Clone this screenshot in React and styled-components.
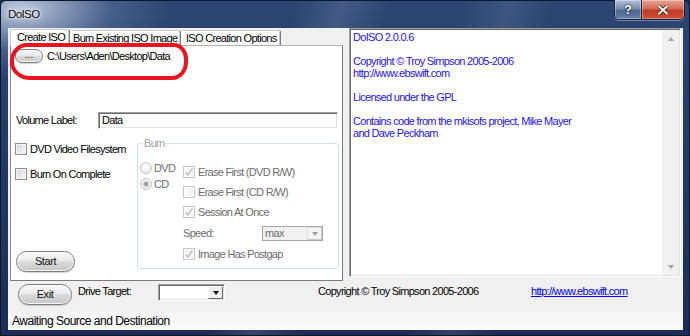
import React from 'react';
import styled, { createGlobalStyle, css } from 'styled-components';

const GlobalStyle = createGlobalStyle`
    html, body {
        margin: 0;
        padding: 0;
        background: #1b2a4d;
    }
    body {
        width: 690px;
        height: 336px;
        overflow: hidden;
        font-family: "Liberation Sans", Arial, sans-serif;
    }
    * {
        box-sizing: border-box;
    }
`;

const uiFont = css`
    font-family: "Liberation Sans", Arial, sans-serif;
    font-size: 11px;
    letter-spacing: -0.7px;
    line-height: 13px;
`;

const Window = styled.div`
    width: 690px;
    height: 336px;
    display: flex;
    flex-direction: column;
    border: 1px solid #0c1630;
    border-radius: 6px 6px 0 0;
    background:
        linear-gradient(105deg, rgba(255, 255, 255, 0) 38%, rgba(170, 190, 225, 0.18) 44%, rgba(255, 255, 255, 0) 50%),
        linear-gradient(100deg, rgba(255, 255, 255, 0) 62%, rgba(170, 190, 225, 0.14) 68%, rgba(255, 255, 255, 0) 74%),
        radial-gradient(ellipse 150px 70px at 20px 8px, rgba(196, 208, 228, 0.95), rgba(120, 145, 185, 0.35) 60%, rgba(60, 85, 130, 0) 100%),
        linear-gradient(180deg, #2d4572 0%, #223862 55%, #1c2d55 100%);
`;

const TitleBar = styled.div`
    height: 27px;
    flex: none;
    display: flex;
    align-items: flex-start;
    padding-left: 7px;
`;

const Title = styled.div`
    font-family: "Liberation Sans", Arial, sans-serif;
    font-size: 11.5px;
    letter-spacing: -0.6px;
    color: #000;
    line-height: 27px;
    text-shadow: 0 0 6px #fff, 0 0 3px #fff, 0 0 1px rgba(255, 255, 255, 0.9);
    flex: 1;
`;

const CaptionGroup = styled.div`
    display: flex;
    margin-right: 4px;
    margin-top: -1px;
    border: 1px solid #17213a;
    border-top: none;
    border-radius: 0 0 5px 5px;
    overflow: hidden;
    box-shadow: 0 1px 0 rgba(255, 255, 255, 0.35);
`;

const CaptionButton = styled.div`
    height: 19px;
    width: ${p => p.w}px;
    display: flex;
    align-items: center;
    justify-content: center;
    color: #fff;
    font-family: "Liberation Sans", Arial, sans-serif;
    font-weight: bold;
    font-size: 13px;
    text-shadow: 0 0 2px #000, 0 0 1px #000;
    box-shadow: inset 0 0 0 1px rgba(255, 255, 255, 0.35);
    background: ${p =>
        p.close
            ? 'linear-gradient(180deg, #e9a596 0%, #d46a55 45%, #c23b22 55%, #c9503a 100%)'
            : 'linear-gradient(180deg, #b5c2d8 0%, #7c90b4 45%, #4f668f 55%, #6780a8 100%)'};
    & + & {
        border-left: 1px solid #17213a;
    }
`;

const Client = styled.div`
    flex: 1;
    margin: 0 6px 5px 7px;
    background: #f0f0f0;
    display: flex;
    flex-direction: column;
    ${uiFont};
    color: #000;
`;

const Main = styled.div`
    height: 253px;
    flex: none;
    display: flex;
    align-items: flex-start;
`;

const TabArea = styled.div`
    position: relative;
    margin-left: 2px;
    width: 333px;
    height: 253px;
    padding-top: 1px;
    display: flex;
    flex-direction: column;
`;

const TabStrip = styled.div`
    height: 16px;
    display: flex;
    align-items: flex-end;
`;

const Tab = styled.div`
    position: relative;
    width: ${p => p.w}px;
    height: ${p => (p.active ? 17 : 15)}px;
    margin-bottom: ${p => (p.active ? -1 : 0)}px;
    z-index: ${p => (p.active ? 1 : 0)};
    background: #fff;
    border-top: 1px solid #c8c8c8;
    border-left: 1px solid ${p => (p.first ? '#c8c8c8' : '#ffffff')};
    border-right: 1px solid #7a7a7a;
    box-shadow: inset -1px 0 0 #c8c8c8;
    border-radius: 2px 2px 0 0;
    padding-left: ${p => p.pad}px;
    white-space: nowrap;
    line-height: ${p => (p.active ? 15 : 14)}px;
`;

const TabPage = styled.div`
    flex: 1;
    background: #fff;
    border: 1px solid;
    border-color: #b4b4b4 #7a7a7a #7a7a7a #8a8a8a;
    display: flex;
    flex-direction: column;
`;

const Annotation = styled.div`
    position: absolute;
    left: 0;
    top: 15px;
    width: 178px;
    height: 37px;
    border: 4px solid #e8141f;
    border-radius: 17px 14px 16px 20px / 18px 16px 18px 18px;
    pointer-events: none;
    z-index: 2;
`;

const BrowseRow = styled.div`
    display: flex;
    align-items: center;
    gap: 4px;
    margin-top: 3px;
    padding-left: 4px;
`;

const AeroButton = styled.div`
    width: ${p => p.w}px;
    height: ${p => p.h}px;
    flex: none;
    display: flex;
    align-items: center;
    justify-content: center;
    border: 1px solid #7c7c7c;
    border-radius: ${p => Math.round(p.h / 2)}px;
    background: linear-gradient(180deg, #f7f7f7 0%, #ededed 42%, #dadada 52%, #cdcdcd 85%, #c4c4c4 100%);
    box-shadow: inset 0 0 0 1px rgba(255, 255, 255, 0.85), 0 1px 1px rgba(0, 0, 0, 0.18);
    color: #111;
    font-size: ${p => (p.small ? 10 : 11)}px;
    letter-spacing: ${p => (p.small ? 0 : -0.4)}px;
    padding-bottom: ${p => (p.small ? 3 : 0)}px;
`;

const VolumeRow = styled.div`
    display: flex;
    align-items: center;
    margin-top: 49px;
    padding-left: 5px;
`;

const FieldLabel = styled.div`
    width: ${p => p.w}px;
    flex: none;
    color: ${p => (p.disabled ? '#6d6d6d' : '#000')};
`;

const TextInput = styled.div`
    width: 240px;
    height: 17px;
    background: #fff;
    border: 1px solid;
    border-color: #a0a0a0 #ffffff #ffffff #a0a0a0;
    box-shadow: inset 1px 1px 0 #696969, inset -1px -1px 0 #e3e3e3;
    padding-left: 3px;
    line-height: 15px;
`;

const Lower = styled.div`
    flex: 1;
    display: flex;
    margin-top: 8px;
`;

const LeftCol = styled.div`
    width: 126px;
    padding-left: 4px;
    padding-bottom: 8px;
    display: flex;
    flex-direction: column;
`;

const CheckRow = styled.div`
    display: flex;
    align-items: center;
    gap: ${p => p.gap ?? 3}px;
    height: 12px;
    margin-top: ${p => p.mt || 0}px;
    color: ${p => (p.disabled ? '#6d6d6d' : '#000')};
    white-space: nowrap;
`;

const Box = styled.span`
    width: 12px;
    height: 12px;
    flex: none;
    display: inline-flex;
    align-items: center;
    justify-content: center;
    border: 1px solid ${p => (p.disabled ? '#c6c6c6' : '#8e8f8f')};
    background: ${p =>
        p.disabled ? '#f4f4f4' : 'linear-gradient(135deg, #cfd1d4 0%, #e8e9ea 55%, #fbfbfb 100%)'};
    box-shadow: inset 0 0 0 1px ${p => (p.disabled ? '#fbfbfb' : '#f4f4f4')};
`;

const Radio = styled.span`
    width: 12px;
    height: 12px;
    flex: none;
    border-radius: 50%;
    display: inline-flex;
    align-items: center;
    justify-content: center;
    border: 1px solid #c4c4c4;
    background: radial-gradient(circle at 40% 35%, #fdfdfd, #e6e6e6);
    &::after {
        content: '';
        width: 4px;
        height: 4px;
        border-radius: 50%;
        background: ${p => (p.checked ? '#9c9c9c' : 'transparent')};
        box-shadow: ${p => (p.checked ? '0 0 0 1px #c9c9c9' : 'none')};
    }
`;

const StartSlot = styled.div`
    margin-top: auto;
    margin-left: 1px;
`;

const GroupBox = styled.fieldset`
    margin: 0;
    padding: 0;
    width: 202px;
    height: 132px;
    border: 1px solid #d5dfe5;
    border-radius: 3px;
    display: flex;
    min-width: 0;
`;

const Legend = styled.legend`
    margin-left: 5px;
    padding: 0 1px;
    color: #a0a0a0;
    line-height: 13px;
`;

const RadioCol = styled.div`
    width: 43px;
    margin-left: 2px;
    margin-top: 12px;
    display: flex;
    flex-direction: column;
    gap: 4px;
`;

const OptionsCol = styled.div`
    margin-top: 16px;
    display: flex;
    flex-direction: column;
    gap: 8px;
`;

const SpeedRow = styled.div`
    display: flex;
    align-items: center;
    height: 15px;
    margin-bottom: -1px;
`;

const Combo = styled.div`
    width: ${p => p.w}px;
    height: ${p => p.h}px;
    display: flex;
    align-items: stretch;
    border: 1px solid;
    border-color: ${p => (p.disabled ? '#a6a6a6' : '#a0a0a0 #ffffff #ffffff #a0a0a0')};
    box-shadow: ${p => (p.disabled ? 'none' : 'inset 1px 1px 0 #696969, inset -1px -1px 0 #e3e3e3')};
    background: ${p => (p.disabled ? '#f0f0f0' : '#fff')};
    color: ${p => (p.disabled ? '#6d6d6d' : '#000')};
`;

const ComboText = styled.div`
    flex: 1;
    padding-left: 2px;
    line-height: ${p => p.lh}px;
`;

const DropButton = styled.div`
    width: ${p => p.w}px;
    margin: ${p => (p.disabled ? 0 : 1)}px;
    display: flex;
    align-items: center;
    justify-content: center;
    background: ${p => (p.disabled ? '#f4f4f4' : '#f0f0f0')};
    border: 1px solid;
    border-color: ${p => (p.disabled ? '#e0e0e0 #c8c8c8 #c8c8c8 #e0e0e0' : '#f8f8f8 #696969 #696969 #f8f8f8')};
    &::after {
        content: '';
        border-left: 3.5px solid transparent;
        border-right: 3.5px solid transparent;
        border-top: 4px solid ${p => (p.disabled ? '#a0a0a0' : '#000')};
    }
`;

const InfoBox = styled.div`
    margin-left: 6px;
    width: 332px;
    height: 249px;
    display: flex;
    background: #fff;
    border: 1px solid;
    border-color: #a0a0a0 #ffffff #ffffff #a0a0a0;
    box-shadow: inset 1px 1px 0 #696969, inset -1px -1px 0 #e3e3e3;
    padding: 1px;
`;

const InfoText = styled.div`
    flex: 1;
    padding: 1px 2px;
    color: #1f14f2;
    line-height: 12px;
`;

const InfoLine = styled.div`
    height: 12px;
    white-space: nowrap;
`;

const ScrollBar = styled.div`
    width: 17px;
    display: flex;
    flex-direction: column;
    justify-content: space-between;
    background: #f0f0f0;
`;

const ScrollArrow = styled.div`
    height: 17px;
    display: flex;
    align-items: center;
    justify-content: center;
    &::after {
        content: '';
        border-left: 3.5px solid transparent;
        border-right: 3.5px solid transparent;
        ${p => (p.up ? 'border-bottom' : 'border-top')}: 4px solid #a3a3a3;
    }
`;

const BottomBar = styled.div`
    height: 31px;
    flex: none;
    display: flex;
    align-items: flex-start;
    padding-left: 10px;
    padding-top: 3px;
`;

const BottomText = styled.div`
    margin-top: 1px;
    width: ${p => p.w}px;
    margin-left: ${p => p.ml || 0}px;
    flex: none;
    white-space: nowrap;
`;

const Link = styled.a`
    color: #0000ff;
    text-decoration: underline;
    margin-top: 1px;
`;

const StatusBar = styled.div`
    height: 18px;
    flex: none;
    background: linear-gradient(180deg, #f6f6f6, #fafafa);
    padding-left: 4px;
    font-size: 12px;
    letter-spacing: -0.5px;
    line-height: 18px;
    color: #000;
`;

const Check = () => (
    <svg width="10" height="10" viewBox="0 0 10 10">
        <path d="M1.5 5.5 L3.8 8 L8.5 1.5" fill="none" stroke="#a8a8a8" strokeWidth="1.1" />
    </svg>
);

const CheckOption = ({ label, checked, disabled, mt }) => (
    <CheckRow disabled={disabled} mt={mt}>
        <Box disabled={disabled}>{checked && <Check />}</Box>
        {label}
    </CheckRow>
);

const infoLines = [
    'DoISO 2.0.0.6',
    '',
    'Copyright \u00a9 Troy Simpson 2005-2006',
    'http://www.ebswift.com',
    '',
    'Licensed under the GPL',
    '',
    'Contains code from the mkisofs project, Mike Mayer',
    'and Dave Peckham',
];

const App = () => (
    <>
        <GlobalStyle />
        <Window>
            <TitleBar>
                <Title>DoISO</Title>
                <CaptionGroup>
                    <CaptionButton w={26}>?</CaptionButton>
                    <CaptionButton w={43} close>
                        <svg width="12" height="10" viewBox="0 0 12 10">
                            <path d="M1.5 1 L10.5 9 M10.5 1 L1.5 9" stroke="#3a1a14" strokeWidth="3.4" />
                            <path d="M1.5 1 L10.5 9 M10.5 1 L1.5 9" stroke="#fff" strokeWidth="2" />
                        </svg>
                    </CaptionButton>
                </CaptionGroup>
            </TitleBar>
            <Client>
                <Main>
                    <TabArea>
                        <TabStrip>
                            <Tab w={60} pad={6} active first>Create ISO</Tab>
                            <Tab w={111} pad={2}>Burn Existing ISO Image</Tab>
                            <Tab w={100} pad={4}>ISO Creation Options</Tab>
                        </TabStrip>
                        <TabPage>
                            <BrowseRow>
                                <AeroButton w={28} h={14} small>...</AeroButton>
                                <span>C:\Users\Aden\Desktop\Data</span>
                            </BrowseRow>
                            <VolumeRow>
                                <FieldLabel w={82}>Volume Label:</FieldLabel>
                                <TextInput>Data</TextInput>
                            </VolumeRow>
                            <Lower>
                                <LeftCol>
                                    <CheckOption label="DVD Video Filesystem" mt={6} />
                                    <CheckOption label="Burn On Complete" mt={13} />
                                    <StartSlot>
                                        <AeroButton w={59} h={21}>Start</AeroButton>
                                    </StartSlot>
                                </LeftCol>
                                <GroupBox>
                                    <Legend>Burn</Legend>
                                    <RadioCol>
                                        <CheckRow disabled gap={2}>
                                            <Radio />DVD
                                        </CheckRow>
                                        <CheckRow disabled gap={2}>
                                            <Radio checked />CD
                                        </CheckRow>
                                    </RadioCol>
                                    <OptionsCol>
                                        <CheckOption label="Erase First (DVD R/W)" checked disabled />
                                        <CheckOption label="Erase First (CD R/W)" disabled />
                                        <CheckOption label="Session At Once" checked disabled />
                                        <SpeedRow>
                                            <FieldLabel w={79} disabled>Speed:</FieldLabel>
                                            <Combo w={61} h={15} disabled>
                                                <ComboText lh={13}>max</ComboText>
                                                <DropButton w={15} disabled />
                                            </Combo>
                                        </SpeedRow>
                                        <CheckOption label="Image Has Postgap" checked disabled />
                                    </OptionsCol>
                                </GroupBox>
                            </Lower>
                        </TabPage>
                        <Annotation />
                    </TabArea>
                    <InfoBox>
                        <InfoText>
                            {infoLines.map((line, i) => (
                                <InfoLine key={i}>{line}</InfoLine>
                            ))}
                        </InfoText>
                        <ScrollBar>
                            <ScrollArrow up />
                            <ScrollArrow />
                        </ScrollBar>
                    </InfoBox>
                </Main>
                <BottomBar>
                    <AeroButton w={54} h={21}>Exit</AeroButton>
                    <BottomText w={80} ml={6}>Drive Target:</BottomText>
                    <Combo w={67} h={17}>
                        <ComboText lh={13} />
                        <DropButton w={15} />
                    </Combo>
                    <BottomText w={213} ml={93}>Copyright © Troy Simpson 2005-2006</BottomText>
                    <Link>http://www.ebswift.com</Link>
                </BottomBar>
                <StatusBar>Awaiting Source and Destination</StatusBar>
            </Client>
        </Window>
    </>
);

export default App;
